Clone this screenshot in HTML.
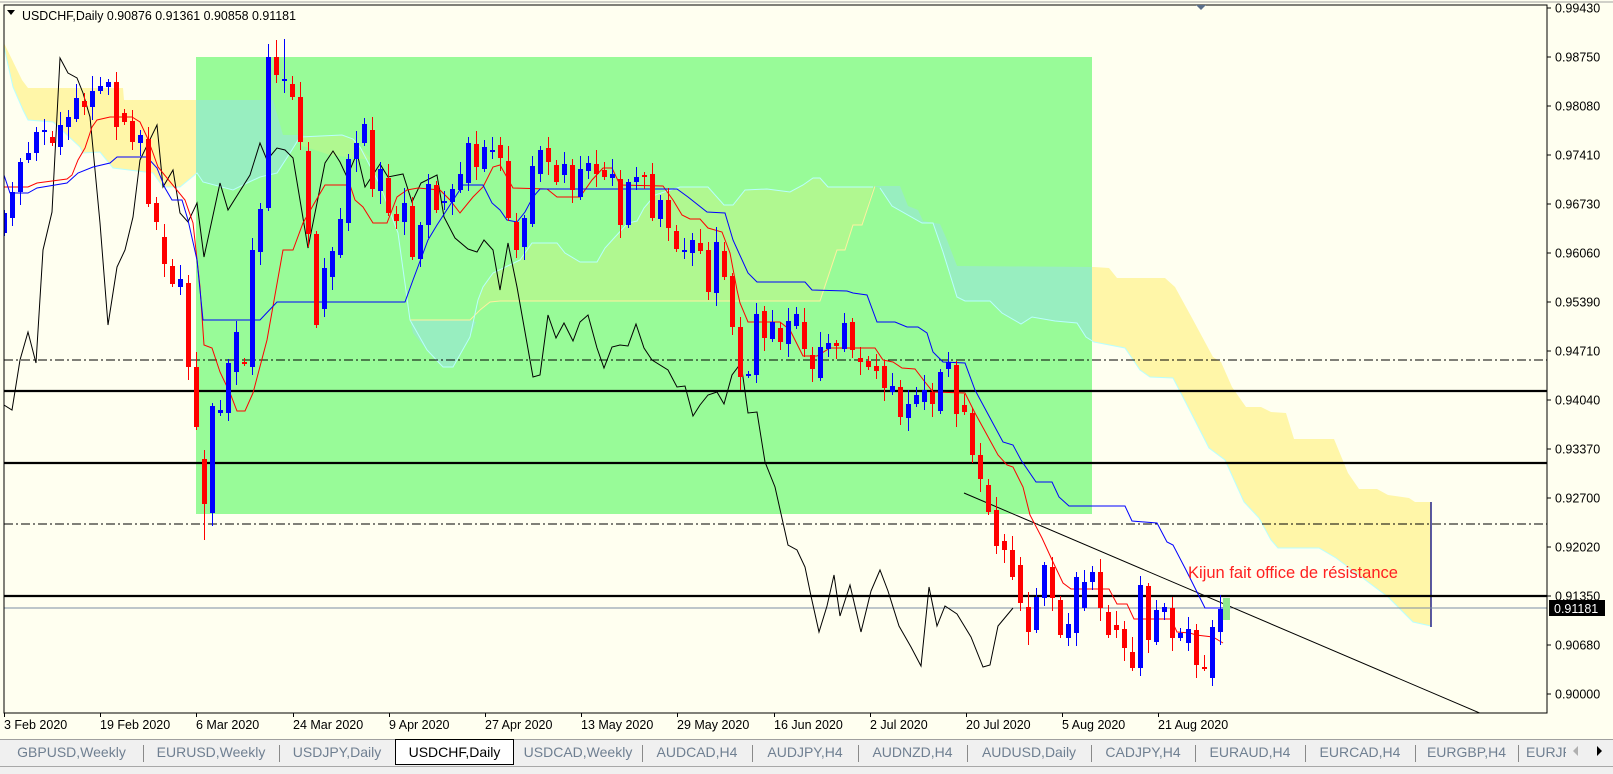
<!DOCTYPE html>
<html><head><meta charset="utf-8"><style>
body{margin:0;width:1613px;height:774px;background:#fffff0;overflow:hidden;position:relative;font-family:"Liberation Sans",sans-serif}
svg{position:absolute;left:0;top:0}
.tab{position:absolute;top:740px;height:24px;line-height:24px;font-size:14px;color:#6f7f91;text-align:center}
.sep{position:absolute;top:745px;width:1px;height:17px;background:#8a8a8a}
</style></head><body>
<svg id="s" width="1613" height="740" xmlns="http://www.w3.org/2000/svg">
<defs>
<clipPath id="cin"><rect x="196" y="57" width="896" height="457"/></clipPath>
<clipPath id="cout"><path clip-rule="evenodd" d="M0 0H1613V740H0Z M196 57V514H1092V57Z"/></clipPath>
<clipPath id="chart"><rect x="4" y="5" width="1543" height="708"/></clipPath>
</defs>
<rect x="0" y="0" width="1613" height="740" fill="#fffff0"/>
<line x1="0" y1="2" x2="1613" y2="2" stroke="#a0a0a0" stroke-width="1"/>
<g clip-path="url(#chart)">
<g id="cloudL">
<polygon clip-path="url(#cout)" fill="#fff6a8" points="4,43 22,80 28,88 123,88 124,100 273,100 283,135 307,135 300,137 290,153 277,173 260,177 247,183 233,190 203,182 197,173 180,187 163,187 153,173 113,168 100,152 83,153 80,147 53,122 28,120 23,110 13,87 4,47"/>
</g>
<rect x="196" y="57" width="896" height="457" fill="#98fb98"/>
<polygon clip-path="url(#cin)" fill="#98eec0" points="4,43 22,80 28,88 123,88 124,100 273,100 283,135 307,135 300,137 290,153 277,173 260,177 247,183 233,190 203,182 197,173 180,187 163,187 153,173 113,168 100,152 83,153 80,147 53,122 28,120 23,110 13,87 4,47"/>
<polygon fill="#b0f890" points="300,137 342,135 353,139 360,147 372,160 330,155 300,145"/>
<polygon fill="#98eec0" points="410,320 470,320 476,322 470,337 453,367 443,367 427,350 413,333"/>
<polygon fill="#b0f890" points="478,300 483,287 493,273 520,260 532,243 557,243 565,253 580,262 597,262 605,248 615,237 628,223 637,221 644,208 655,195 680,187 708,187 724,205 733,205 745,190 767,189 790,192 803,185 813,178 820,178 828,187 873,187 862,225 853,225 845,250 837,250 820,301 500,301 490,302 480,310"/>
<polyline fill="none" stroke="#b8ffff" points="478,300 483,287 493,273 520,260 532,243 557,243 565,253 580,262 597,262 605,248 615,237 628,223 637,221 644,208 655,195 680,187 708,187 724,205 733,205 745,190 767,189 790,192 803,185 813,178 820,178 828,187 873,187"/>
<polyline fill="none" stroke="#fff0a0" points="875,186 862,225 853,225 845,250 837,250 820,301 500,301 490,302 480,310 470,320 410,320"/>
<polyline fill="none" stroke="#b8ffff" points="4,47 13,87 23,110 28,120 53,122 80,147 83,153 100,152 113,168 153,173 163,187 180,187 197,173 203,182 233,190 247,183 260,177 277,173 290,153 300,137 342,135 353,139 360,147 380,185 398,233 410,320 427,350 443,367 453,367 470,337 478,300"/>
<g id="cloudR">
<polygon clip-path="url(#cout)" fill="#fff6a8" points="873,186 900,186 908,206 918,210 923,221 940,224 947,240 957,266 1094,267 1109,268 1117,278 1165,278 1175,287 1192,318 1213,357 1221,362 1232,387 1246,407 1261,407 1271,412 1286,413 1294,439 1334,439 1348,473 1359,489 1377,489 1388,495 1409,498 1415,502 1431,502 1431,626 1413,622 1388,597 1336,558 1319,548 1278,548 1271,540 1259,518 1244,502 1225,460 1209,448 1186,403 1173,378 1150,377 1140,370 1125,348 1094,342 1086,337 1077,323 1055,321 1032,317 1021,324 1002,313 990,301 965,301 957,297 943,252 933,223 922,223 892,206 880,188"/>
<polygon clip-path="url(#cin)" fill="#98eec0" points="873,186 900,186 908,206 918,210 923,221 940,224 947,240 957,266 1094,267 1094,342 1086,337 1077,323 1055,321 1032,317 1021,324 1002,313 990,301 965,301 957,297 943,252 933,223 922,223 892,206 880,188"/>
<polyline fill="none" stroke="#b8ffff" points="880,188 892,206 922,223 933,223 943,252 957,297 965,301 990,301 1002,313 1021,324 1032,317 1055,321 1077,323 1086,337 1094,342 1125,348 1140,370 1150,377 1173,378 1186,403 1209,448 1225,460 1244,502 1259,518 1271,540 1278,548 1319,548 1336,558 1388,597 1413,622 1431,626"/>
</g>
<line x1="1431" y1="502" x2="1431" y2="627" stroke="#000080" stroke-width="1.3"/>
<g stroke="#000" fill="none">
<line x1="4" y1="360" x2="1547" y2="360" stroke-dasharray="9,3,2,3"/>
<line x1="4" y1="524" x2="1547" y2="524" stroke-dasharray="9,3,2,3"/>
<line x1="4" y1="391" x2="1547" y2="391" stroke-width="2.2"/>
<line x1="4" y1="463" x2="1547" y2="463" stroke-width="2.2"/>
<line x1="4" y1="596" x2="1547" y2="596" stroke-width="2.2"/>
</g>
<line x1="4" y1="608" x2="1547" y2="608" stroke="#7b8ca5" stroke-width="1"/>
<line x1="964" y1="493" x2="1482" y2="714" stroke="#000" stroke-width="1"/>
<rect x="1223" y="598" width="7" height="22" fill="#90e890"/>
<polyline fill="none" stroke="#000" stroke-width="1" points="4,405 12,410 20,360 28,332 36,363 43,250 52,212 60,58 68,73 77,78 83,93 90,117 100,223 108,325 117,267 125,250 133,217 140,160 157,125 163,187 173,170 180,213 188,222 197,203 204,257 220,183 228,210 250,175 260,143 267,160 277,148 285,150 293,158 308,248 325,163 333,151 340,162 347,177 357,153 365,187 380,164 388,177 403,174 412,202 421,183 437,175 444,217 455,238 468,249 477,252 484,240 493,250 500,290 508,243 517,287 533,377 540,375 548,315 556,338 564,323 573,341 580,322 588,315 597,348 604,368 612,347 620,345 628,346 636,324 644,348 652,360 668,370 677,387 685,386 693,416 700,405 708,395 717,392 724,404 732,375 741,363 748,413 757,412 765,462 775,487 788,545 797,550 805,567 811,596 819,632 827,606 834,575 840,616 850,585 861,632 871,591 880,570 888,591 899,626 911,647 921,666 929,587 937,626 945,606 957,614 971,637 983,667 990,665 998,626 1013,608"/>
<polyline fill="none" stroke="#ff0000" stroke-width="1" points="4,187 28,187 37,183 67,179 72,175 78,160 85,148 92,127 97,120 110,117 132,117 140,122 147,137 153,153 158,167 185,200 193,223 200,287 204,345 212,348 220,372 230,393 237,411 245,411 253,393 267,340 283,250 293,250 303,223 315,202 325,185 350,185 355,200 363,207 373,223 387,223 397,197 407,190 418,188 440,190 450,200 460,213 473,197 483,187 493,167 500,165 513,188 547,189 557,197 580,197 592,180 603,168 612,168 620,185 663,186 673,200 682,215 690,219 700,219 708,228 722,232 730,253 737,290 740,303 748,322 780,322 790,330 803,356 817,356 830,348 875,348 883,360 893,362 902,368 915,369 925,382 933,392 965,393 975,413 998,455 1007,465 1013,467 1023,487 1030,515 1042,538 1053,562 1063,583 1071,589 1109,589 1117,604 1127,604 1134,619 1171,619 1177,632 1190,633 1196,635 1213,637 1223,643"/>
<polyline fill="none" stroke="#0000ff" stroke-width="1" points="4,175 10,193 28,193 37,188 67,183 78,173 93,167 110,163 117,157 147,157 157,168 165,188 172,200 182,200 188,220 197,260 203,320 260,320 277,302 405,302 413,280 428,240 437,225 463,185 483,185 492,203 500,210 507,220 517,222 525,212 533,197 540,189 677,189 688,197 707,212 725,213 733,240 748,273 757,282 805,282 812,290 847,291 853,293 867,295 877,322 895,322 907,327 918,327 927,333 933,352 943,362 965,363 975,390 1003,442 1013,445 1021,460 1036,482 1052,482 1059,497 1069,506 1125,506 1132,521 1157,523 1167,542 1173,545 1186,570 1196,590 1205,608 1223,608"/>
<g id="candles"></g>
</g>
<rect x="4" y="5" width="1543" height="708" fill="none" stroke="#000" stroke-width="1"/>
<polygon points="7,10 15,10 11,15" fill="#000"/>
<text x="22" y="20" font-size="13" textLength="274" lengthAdjust="spacingAndGlyphs">USDCHF,Daily  0.90876 0.91361 0.90858 0.91181</text>
<polygon points="1196,5 1206,5 1201,10" fill="#5a6f8a"/>
<g id="axis" font-size="12.5" fill="#000"></g>
<text x="1188" y="578" font-size="16.5" fill="#ff2020" textLength="210" lengthAdjust="spacingAndGlyphs">Kijun fait office de résistance</text>
<rect x="1549" y="600" width="56" height="16" fill="#000"/>
<text x="1554" y="613" font-size="12.5" fill="#fff">0.91181</text>
<g id="dates" font-size="12.5" fill="#000"></g>
</svg>
<div style="position:absolute;left:0;top:739px;width:1613px;height:26px;background:#f0f0f0;border-top:1px solid #a0a0a0"></div>
<div style="position:absolute;left:0;top:766px;width:1613px;height:1px;background:#a8a8a8"></div>
<div style="position:absolute;left:0;top:767px;width:1613px;height:7px;background:#f0f0f0"></div>
<div class="tab" style="left:0;width:143px">GBPUSD,Weekly</div>
<div class="sep" style="left:143px"></div>
<div class="tab" style="left:143px;width:136px">EURUSD,Weekly</div>
<div class="sep" style="left:279px"></div>
<div class="tab" style="left:279px;width:116px">USDJPY,Daily</div>
<div class="tab" style="left:395px;top:739px;width:117px;height:24px;background:#fff;border:1px solid #000;border-top:1px solid #000;color:#000">USDCHF,Daily</div>
<div class="tab" style="left:514px;width:128px">USDCAD,Weekly</div>
<div class="sep" style="left:642px"></div>
<div class="tab" style="left:642px;width:110px">AUDCAD,H4</div>
<div class="sep" style="left:752px"></div>
<div class="tab" style="left:752px;width:106px">AUDJPY,H4</div>
<div class="sep" style="left:858px"></div>
<div class="tab" style="left:858px;width:109px">AUDNZD,H4</div>
<div class="sep" style="left:967px"></div>
<div class="tab" style="left:967px;width:124px">AUDUSD,Daily</div>
<div class="sep" style="left:1091px"></div>
<div class="tab" style="left:1091px;width:104px">CADJPY,H4</div>
<div class="sep" style="left:1195px"></div>
<div class="tab" style="left:1195px;width:110px">EURAUD,H4</div>
<div class="sep" style="left:1305px"></div>
<div class="tab" style="left:1305px;width:110px">EURCAD,H4</div>
<div class="sep" style="left:1415px"></div>
<div class="tab" style="left:1415px;width:103px">EURGBP,H4</div>
<div class="sep" style="left:1518px"></div>
<div class="tab" style="left:1526px;width:40px;text-align:left;overflow:hidden">EURJPY</div>
<div style="position:absolute;left:1566px;top:740px;width:47px;height:24px;background:#f0f0f0"></div>
<div style="position:absolute;left:1573px;top:746px;width:0;height:0;border-top:5px solid transparent;border-bottom:5px solid transparent;border-right:5px solid #b0b0b0"></div>
<div style="position:absolute;left:1597px;top:746px;width:0;height:0;border-top:5px solid transparent;border-bottom:5px solid transparent;border-left:5px solid #000"></div>
<script>
var NS="http://www.w3.org/2000/svg";
function el(t,a,p){var e=document.createElementNS(NS,t);for(var k in a)e.setAttribute(k,a[k]);p.appendChild(e);return e;}
var data="4:233,213;12:218,192;20:192,162;28:160,153;36:153,132;44:132,131;52:137,143;60:147,125;68:127,117;76:119,98;84:101,107;92:107,91;100:91,86;108:87,82;116:82,127;124:113,122;132:121,142;140:143,135;148:139,204;156:203,222;164:237,264;172:266,284;180:287,279;188:283,367;196:367,427;204:459,504;212:513,406;220:413,410;228:413,363;236:372,332;244:363,363;252:367,250;260:252,209;268:208,57;276:57,75;284:80,80;292:84,97;300:97,142;308:151,234;316:234,325;324:309,268;332:277,251;340:255,219;348:223,159;356:159,143;364:143,124;372:130,189;380:191,169;388:178,213;396:214,221;404:222,203;412:206,257;420:259,225;428:225,184;436:185,210;444:202,202;452:202,189;460:190,174;468:183,143;476:144,167;484:169,147;492:151,151;500:145,158;508:161,218;516:222,250;524:247,218;532:224,166;540:174,150;548:148,162;556:165,182;564:175,164;572:165,190;580:197,169;588:171,163;596:164,174;604:170,177;612:178,174;620:179,225;628:225,182;636:182,177;644:176,176;652:174,218;660:219,200;668:200,228;676:231,249;684:251,251;692:253,240;700:243,251;708:250,292;716:293,242;724:251,277;732:276,327;740:327,377;748:375,375;756:375,314;764:311,338;772:339,322;780:328,342;788:344,321;796:326,314;804:322,349;812:355,369;820:378,347;828:349,343;836:343,346;844:349,323;852:322,350;860:358,362;868:361,367;876:366,371;884:366,388;892:392,386;900:387,417;908:418,404;916:404,395;924:402,390;932:392,404;940:411,372;948:369,362;956:365,414;964:405,412;972:413,455;980:455,479;988:485,512;996:510,546;1004:541,550;1012:550,577;1020:565,603;1028:607,632;1036:630,597;1044:598,565;1052:567,598;1060:600,635;1068:638,624;1076:633,577;1084:608,582;1092:582,572;1100:572,608;1108:612,635;1116:625,630;1124:629,648;1132:652,668;1140:668,585;1148:586,640;1156:642,610;1164:612,607;1172:608,638;1180:638,633;1188:643,629;1196:630,665;1204:668,668;1212:678,627;1220:632,609";
var extra={204:[459,540],268:[50,210],276:[40,80],284:[39,90],212:[513,513]};
var g=document.getElementById("candles");
data.split(";").forEach(function(s,i){
 var p=s.split(":"),x=+p[0],v=p[1].split(","),o=+v[0],c=+v[1];
 var top=Math.min(o,c),bot=Math.max(o,c);
 var hi=top-(3+(i*7)%13),lo=bot+(3+(i*5)%15);
 if(extra[x]){hi=Math.min(hi,extra[x][0]);lo=Math.max(lo,extra[x][1]);}
 var col=c<o?"#0000ff":(c>o?"#ff0000":(i%2?"#0000ff":"#ff0000"));
 el("line",{x1:x+0.5,x2:x+0.5,y1:hi,y2:lo,stroke:col,"stroke-width":1},g);
 var h=Math.max(bot-top,2);
 el("rect",{x:x-2,y:(bot-top<2?top-1:top),width:5,height:h,fill:col},g);
});
var ax=document.getElementById("axis");
var labs=["0.99430","0.98750","0.98080","0.97410","0.96730","0.96060","0.95390","0.94710","0.94040","0.93370","0.92700","0.92020","0.91350","0.90680","0.90000"];
labs.forEach(function(l,k){var y=8+49*k;el("line",{x1:1547,x2:1551,y1:y,y2:y,stroke:"#000"},ax);var t=el("text",{x:1555,y:y+4.5},ax);t.textContent=l;});
var dg=document.getElementById("dates");
var ds=["3 Feb 2020","19 Feb 2020","6 Mar 2020","24 Mar 2020","9 Apr 2020","27 Apr 2020","13 May 2020","29 May 2020","16 Jun 2020","2 Jul 2020","20 Jul 2020","5 Aug 2020","21 Aug 2020"];
ds.forEach(function(d,k){var x=Math.round(4+96.2*k);el("line",{x1:x+0.5,x2:x+0.5,y1:713,y2:717,stroke:"#000"},dg);var t=el("text",{x:x+0,y:729},dg);t.textContent=d;});
</script>
</body></html>
